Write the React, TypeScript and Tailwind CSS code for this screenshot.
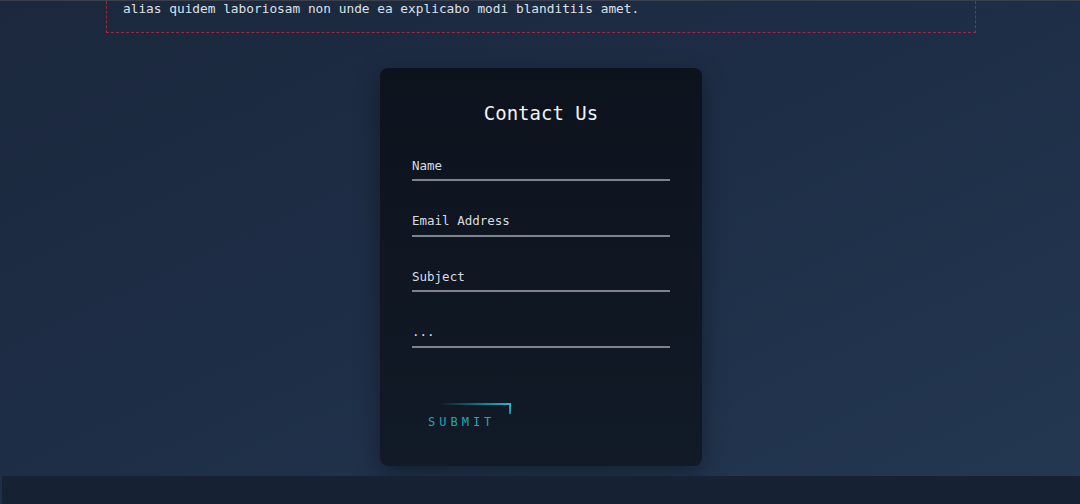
const fields = ["Name", "Email Address", "Subject", "..."];

const mono = { fontFamily: '"DejaVu Sans Mono", "Liberation Mono", monospace' };

const ContactField = ({ placeholder }: { placeholder: string }) => (
  <div className="border-b-2 border-[#7d828b] pb-1">
    <input
      type="text"
      placeholder={placeholder}
      className="block h-[18px] w-full bg-transparent text-[12.5px] text-[#e4e6ea] outline-none placeholder:text-[#d9dce1]"
      style={mono}
    />
  </div>
);

const SubmitButton = () => (
  <button
    type="button"
    className="relative px-4 py-2.5 text-[12px] uppercase tracking-[4px] text-[#1fa7b4]"
    style={mono}
  >
    <span className="absolute right-0 top-0 h-[2px] w-[72%] bg-gradient-to-r from-transparent to-[#22bcc8]" />
    <span className="absolute right-0 top-0 h-[11px] w-[2px] bg-gradient-to-b from-[#22bcc8] to-[#22bcc8]/70" />
    Submit
  </button>
);

export default function App() {
  return (
    <div
      className="flex min-h-[504px] flex-col border-t border-[#3a404b] bg-gradient-to-br from-[#1b283d] via-[#1e2e47] to-[#243852] pl-[2px]"
      style={mono}
    >
      <div className="mx-auto w-[870px] border-x border-b border-dashed border-[#9b2a3e] px-4 pb-4">
        <p className="text-[12.8px] leading-[15px] text-[#dde1e7]">
          alias quidem laboriosam non unde ea explicabo modi blanditiis amet.
        </p>
      </div>

      <div className="mx-auto mt-[35px] flex h-[398px] w-[322px] flex-col rounded-lg bg-gradient-to-b from-[#0d131d] to-[#111a27] px-8 pt-[31px] shadow-[0_8px_24px_rgba(0,0,0,0.35)]">
        <h2 className="text-center text-[19px] leading-7 text-[#f2f3f5]">Contact Us</h2>
        <form className="mt-[30px] flex flex-col gap-[31.5px]">
          {fields.map((field) => (
            <ContactField key={field} placeholder={field} />
          ))}
        </form>
        <div className="mt-[55px]">
          <SubmitButton />
        </div>
      </div>

      <div className="mt-[10px] h-[28px] bg-[#172134]" />
    </div>
  );
}
